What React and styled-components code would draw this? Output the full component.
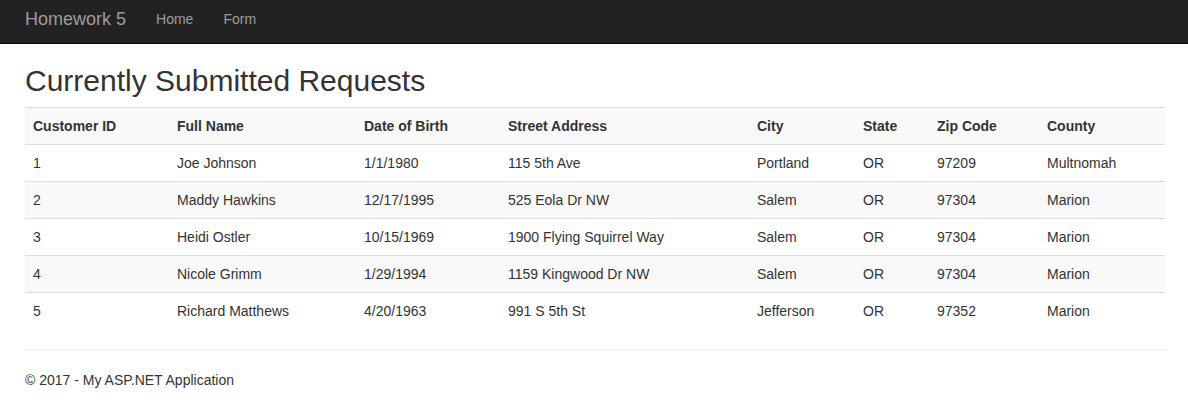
import React from "react";
import styled, { createGlobalStyle } from "styled-components";

const columns = [
  { label: "Customer ID", width: 144 },
  { label: "Full Name", width: 187 },
  { label: "Date of Birth", width: 144 },
  { label: "Street Address", width: 249 },
  { label: "City", width: 106 },
  { label: "State", width: 74 },
  { label: "Zip Code", width: 110 },
  { label: "County", width: 126 },
];

const requests = [
  ["1", "Joe Johnson", "1/1/1980", "115 5th Ave", "Portland", "OR", "97209", "Multnomah"],
  ["2", "Maddy Hawkins", "12/17/1995", "525 Eola Dr NW", "Salem", "OR", "97304", "Marion"],
  ["3", "Heidi Ostler", "10/15/1969", "1900 Flying Squirrel Way", "Salem", "OR", "97304", "Marion"],
  ["4", "Nicole Grimm", "1/29/1994", "1159 Kingwood Dr NW", "Salem", "OR", "97304", "Marion"],
  ["5", "Richard Matthews", "4/20/1963", "991 S 5th St", "Jefferson", "OR", "97352", "Marion"],
];

function App() {
  return (
    <>
      <GlobalStyle />
      <Navbar>
        <Brand href="#">Homework 5</Brand>
        <NavList>
          <NavLink href="#">Home</NavLink>
          <NavLink href="#">Form</NavLink>
        </NavList>
      </Navbar>
      <Container>
        <Title>Currently Submitted Requests</Title>
        <Table>
          <colgroup>
            {columns.map((c) => (
              <col key={c.label} style={{ width: c.width }} />
            ))}
          </colgroup>
          <tbody>
            <Row $striped>
              {columns.map((c) => (
                <HeadCell key={c.label}>{c.label}</HeadCell>
              ))}
            </Row>
            {requests.map((r, i) => (
              <Row key={r[0]} $striped={i % 2 === 1}>
                {r.map((v, j) => (
                  <Cell key={j}>{v}</Cell>
                ))}
              </Row>
            ))}
          </tbody>
        </Table>
        <Rule />
        <Footer>© 2017 - My ASP.NET Application</Footer>
      </Container>
    </>
  );
}

export default App;

const GlobalStyle = createGlobalStyle`
  * { box-sizing: border-box; }
  body {
    margin: 0;
    font-family: "Liberation Sans", Arial, Helvetica, sans-serif;
    font-size: 14px;
    line-height: 20px;
    color: #333;
    background: #fff;
  }
`;

const Navbar = styled.nav`
  display: flex;
  align-items: center;
  height: 44px;
  padding: 0 0 6px 10px;
  background: #222;
  border-bottom: 1px solid #080808;
`;

const Brand = styled.a`
  padding: 0 15px;
  font-size: 18px;
  line-height: 20px;
  color: #9d9d9d;
  text-decoration: none;
`;

const NavList = styled.div`
  display: flex;
`;

const NavLink = styled.a`
  padding: 0 15px;
  color: #9d9d9d;
  text-decoration: none;
`;

const Container = styled.main`
  width: 1140px;
  margin-left: 25px;
`;

const Title = styled.h2`
  margin: 20px 0 10px;
  font-size: 30px;
  font-weight: 500;
  line-height: 33px;
`;

const Table = styled.table`
  width: 100%;
  border-collapse: collapse;
  border-spacing: 0;
  table-layout: fixed;
`;

const Row = styled.tr`
  background: ${(p) => (p.$striped ? "#f9f9f9" : "transparent")};
`;

const Cell = styled.td`
  padding: 8px;
  line-height: 20px;
  text-align: left;
  vertical-align: top;
  border-top: 1px solid #ddd;
  white-space: nowrap;
`;

const HeadCell = styled(Cell).attrs({ as: "th" })`
  font-weight: bold;
`;

const Rule = styled.hr`
  margin: 20px 0;
  border: 0;
  border-top: 1px solid #eee;
`;

const Footer = styled.footer`
  margin: 0;
`;
